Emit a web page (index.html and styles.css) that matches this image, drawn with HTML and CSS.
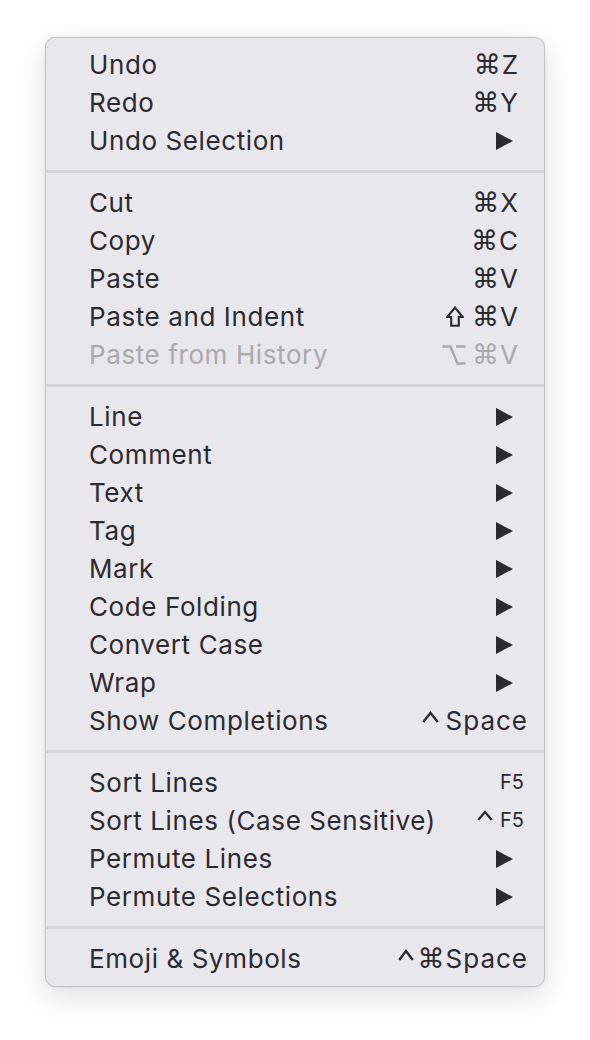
FILE: index.html
```html
<!DOCTYPE html>
<html>
<head>
<meta charset="utf-8">
<link rel="stylesheet" href="styles.css">
</head>
<body>
<div class="menu">
  <div class="row"><span class="label">Undo</span><span class="key"><span class="sym">⌘</span>Z</span></div>
  <div class="row"><span class="label">Redo</span><span class="key"><span class="sym">⌘</span>Y</span></div>
  <div class="row"><span class="label">Undo Selection</span><span class="arrow"></span></div>
  <div class="sep"></div>
  <div class="row"><span class="label">Cut</span><span class="key"><span class="sym">⌘</span>X</span></div>
  <div class="row"><span class="label">Copy</span><span class="key"><span class="sym">⌘</span>C</span></div>
  <div class="row"><span class="label">Paste</span><span class="key"><span class="sym">⌘</span>V</span></div>
  <div class="row"><span class="label">Paste and Indent</span><span class="key"><svg class="ico shift" width="18" height="21" viewBox="0 0 18 21"><path d="M9 1.6 L16.8 11 H12.8 V19.8 H5.2 V11 H1.2 Z" fill="none" stroke="currentColor" stroke-width="2.1" stroke-linejoin="miter"/></svg><span class="sym">⌘</span>V</span></div>
  <div class="row disabled"><span class="label">Paste from History</span><span class="key"><svg class="ico opt" width="24" height="20" viewBox="0 0 24 20"><path d="M0.5 1.5 H8.5 L15.5 18.5 H23.5 M14 1.5 H23.5" fill="none" stroke="currentColor" stroke-width="2.4"/></svg><span class="sym">⌘</span>V</span></div>
  <div class="sep"></div>
  <div class="row"><span class="label">Line</span><span class="arrow"></span></div>
  <div class="row"><span class="label">Comment</span><span class="arrow"></span></div>
  <div class="row"><span class="label">Text</span><span class="arrow"></span></div>
  <div class="row"><span class="label">Tag</span><span class="arrow"></span></div>
  <div class="row"><span class="label">Mark</span><span class="arrow"></span></div>
  <div class="row"><span class="label">Code Folding</span><span class="arrow"></span></div>
  <div class="row"><span class="label">Convert Case</span><span class="arrow"></span></div>
  <div class="row"><span class="label">Wrap</span><span class="arrow"></span></div>
  <div class="row"><span class="label">Show Completions</span><span class="key wide"><svg class="ico caret" width="17" height="12" viewBox="0 0 17 12"><path d="M1.2 11 L8.5 2 L15.8 11" fill="none" stroke="currentColor" stroke-width="2.4"/></svg>Space</span></div>
  <div class="sep"></div>
  <div class="row"><span class="label">Sort Lines</span><span class="key small">F5</span></div>
  <div class="row"><span class="label">Sort Lines (Case Sensitive)</span><span class="key small"><svg class="ico caret caret-small" width="16" height="11" viewBox="0 0 16 11"><path d="M1.2 10 L8 2 L14.8 10" fill="none" stroke="currentColor" stroke-width="2.3"/></svg>F5</span></div>
  <div class="row"><span class="label">Permute Lines</span><span class="arrow"></span></div>
  <div class="row"><span class="label">Permute Selections</span><span class="arrow"></span></div>
  <div class="sep"></div>
  <div class="row"><span class="label">Emoji &amp; Symbols</span><span class="key wide"><svg class="ico caret caret-tight" width="16" height="12" viewBox="0 0 16 12"><path d="M1.2 11 L8 2 L14.8 11" fill="none" stroke="currentColor" stroke-width="2.4"/></svg><span class="sym">⌘</span>Space</span></div>
</div>
</body>
</html>
```

FILE: styles.css
```css
html, body {
  margin: 0;
  padding: 0;
  background: #ffffff;
}

body {
  width: 590px;
  height: 1040px;
  font-family: "Inter", "Liberation Sans", sans-serif;
}

.menu {
  box-sizing: border-box;
  width: 500px;
  margin: 37px 0 0 45px;
  padding: 7px 0 9px 0;
  background: #e8e7ec;
  border: 1px solid #c2c1c5;
  border-radius: 10px;
  box-shadow: 0 10px 30px rgba(0, 0, 0, 0.12), 0 0 6px rgba(0, 0, 0, 0.06);
}

.row {
  box-sizing: border-box;
  height: 38px;
  display: flex;
  align-items: center;
  justify-content: space-between;
  padding: 1px 26px 0 43px;
  color: #2b2a2f;
  font-size: 26px;
  line-height: 37px;
  letter-spacing: 0.6px;
}

.row.disabled {
  color: #aaa9ae;
}

.label {
  white-space: nowrap;
}

.key {
  white-space: nowrap;
  display: flex;
  align-items: center;
  height: 37px;
  letter-spacing: 0;
}

.key.wide {
  letter-spacing: 1px;
  margin-right: -10px;
}

.key.small {
  font-size: 20px;
  margin-right: -6px;
}

.sym {
  font-family: "DejaVu Sans", sans-serif;
  font-size: 27px;
  line-height: 37px;
  letter-spacing: 0;
  margin-right: 1px;
}

.ico {
  display: block;
  flex: none;
}

.shift {
  margin-right: 8px;
}

.opt {
  margin-right: 6px;
}

.caret {
  align-self: flex-start;
  margin-top: 9px;
  margin-right: 7px;
}

.caret-small {
  margin-top: 8px;
}

.caret-tight {
  margin-right: 4px;
}

.arrow {
  width: 0;
  height: 0;
  border-left: 17px solid #2b2a2f;
  border-top: 9.5px solid transparent;
  border-bottom: 9.5px solid transparent;
  margin-right: 5px;
}

.sep {
  height: 3px;
  margin: 11px 0 10px 0;
  background: #d5d4d9;
}
```
